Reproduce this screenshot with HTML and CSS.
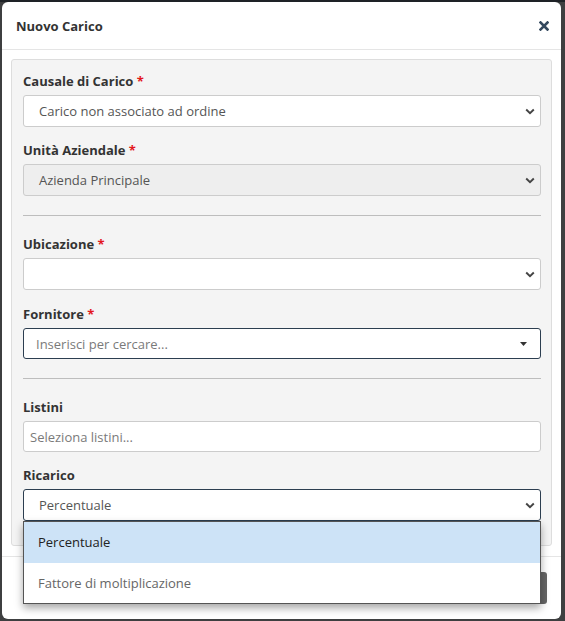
FILE: index.html
```html
<!DOCTYPE html>
<html lang="it">
<head>
<meta charset="utf-8">
<title>Nuovo Carico</title>
<link rel="stylesheet" href="styles.css">
</head>
<body>
<div class="modal">
  <div class="modal-header">
    <h4 class="modal-title">Nuovo Carico</h4>
    <button class="close" type="button" aria-label="Chiudi">
      <svg width="10" height="10" viewBox="0 0 10 10"><path d="M1.5 1.5 L8.5 8.5 M8.5 1.5 L1.5 8.5" stroke="#34495e" stroke-width="2.6" stroke-linecap="square"/></svg>
    </button>
  </div>
  <div class="modal-body">
    <div class="panel">
      <div class="form-group">
        <label class="lbl">Causale di Carico <span class="req">*</span></label>
        <div class="select"><span>Carico non associato ad ordine</span><svg class="chev" width="10" height="7" viewBox="0 0 10 7"><path d="M1.2 1.5 L5 5.2 L8.8 1.5" fill="none" stroke="#444" stroke-width="1.9"/></svg></div>
      </div>
      <div class="form-group">
        <label class="lbl">Unità Aziendale <span class="req">*</span></label>
        <div class="select disabled"><span>Azienda Principale</span><svg class="chev" width="10" height="7" viewBox="0 0 10 7"><path d="M1.2 1.5 L5 5.2 L8.8 1.5" fill="none" stroke="#444" stroke-width="1.9"/></svg></div>
      </div>
      <hr class="sep">
      <div class="form-group wide">
        <label class="lbl">Ubicazione <span class="req">*</span></label>
        <div class="select"><span></span><svg class="chev" width="10" height="7" viewBox="0 0 10 7"><path d="M1.2 1.5 L5 5.2 L8.8 1.5" fill="none" stroke="#444" stroke-width="1.9"/></svg></div>
      </div>
      <div class="form-group">
        <label class="lbl">Fornitore <span class="req">*</span></label>
        <div class="combo focused"><span class="ph">Inserisci per cercare...</span><svg class="caret" width="7" height="4" viewBox="0 0 7 4"><path d="M0 0 H7 L3.5 4 Z" fill="#333"/></svg></div>
      </div>
      <hr class="sep">
      <div class="form-group">
        <label class="lbl">Listini</label>
        <div class="tags"><span class="ph">Seleziona listini...</span></div>
      </div>
      <div class="form-group last">
        <label class="lbl">Ricarico</label>
        <div class="select-wrap">
          <div class="select focused"><span>Percentuale</span><svg class="chev" width="10" height="7" viewBox="0 0 10 7"><path d="M1.2 1.5 L5 5.2 L8.8 1.5" fill="none" stroke="#444" stroke-width="1.9"/></svg></div>
          <ul class="dropdown">
            <li class="opt active">Percentuale</li>
            <li class="opt">Fattore di moltiplicazione</li>
          </ul>
        </div>
      </div>
    </div>
  </div>
  <div class="modal-footer">
    <button class="btn" type="button">Salva</button>
  </div>
</div>
</body>
</html>
```

FILE: styles.css
```css
* { box-sizing: border-box; }

html, body {
  margin: 0;
  padding: 0;
}

body {
  background: #3e3f40;
  font-family: "Open Sans", "Noto Sans", sans-serif;
  font-size: 13px;
  color: #333;
  height: 621px;
  overflow: hidden;
  border-top: 2px solid #1e2226;
}

.modal {
  margin-left: 2px;
  width: 559px;
  height: 617px;
  background: #fff;
  border-radius: 6px;
  overflow: visible;
}

.modal-header {
  height: 48px;
  border-bottom: 1px solid #e5e5e5;
  display: flex;
  align-items: center;
  justify-content: space-between;
  padding: 0 10px 0 14px;
}

.modal-title {
  margin: 0;
  font-size: 13px;
  font-weight: 700;
  color: #333;
}

.close {
  border: 0;
  background: none;
  padding: 0;
  width: 14px;
  height: 14px;
  display: flex;
  align-items: center;
  justify-content: center;
  cursor: pointer;
}

.modal-body {
  padding: 9px 9px 10px 9px;
}

.panel {
  background: #f4f4f4;
  border: 1px solid #dddddd;
  border-radius: 3px;
  padding: 12px 10px 10px 11px;
}

.form-group {
  margin-bottom: 14px;
}

.form-group.wide { margin-bottom: 15px; }

.lbl {
  display: block;
  font-weight: 700;
  line-height: 18px;
  margin-bottom: 5px;
  color: #333;
}

.req { color: #e3181d; }

.select,
.combo,
.tags {
  height: 32px;
  background: #fff;
  border: 1px solid #cccccc;
  border-radius: 3px;
  display: flex;
  align-items: center;
  justify-content: space-between;
  color: #555;
}

.select { padding: 0 4px 0 15px; }
.select .chev { margin-right: 1px; }

.select.disabled { background: #eeeeee; }

.focused { border-color: #2c3e50; }

.combo {
  height: 31px;
  padding: 0 13px 0 12px;
}

.tags {
  height: 31px;
  padding: 0 6px;
}

.ph { color: #7a7a7a; }

.sep {
  border: 0;
  border-top: 1px solid #bdbdbd;
  margin: 19px 0 19px;
  height: 0;
}

.select-wrap { position: relative; }

.dropdown {
  position: absolute;
  top: 100%;
  left: 0;
  width: 518px;
  margin: 0;
  padding: 0;
  list-style: none;
  background: #fff;
  border: 1px solid #555;
  box-shadow: 0 4px 8px rgba(0,0,0,0.35);
  z-index: 5;
}

.opt {
  height: 40px;
  line-height: 40px;
  padding-left: 14px;
  color: #666;
}

.opt.active {
  background: #cde3f7;
  color: #222;
  height: 41px;
  line-height: 41px;
}

.modal-footer {
  border-top: 1px solid #e5e5e5;
  padding: 15px 14px 14px;
  display: flex;
  justify-content: flex-end;
}

.btn {
  height: 32px;
  width: 90px;
  border: 0;
  border-radius: 3px;
  background: #666;
  color: #fff;
  font-family: inherit;
  font-size: 13px;
}
```
